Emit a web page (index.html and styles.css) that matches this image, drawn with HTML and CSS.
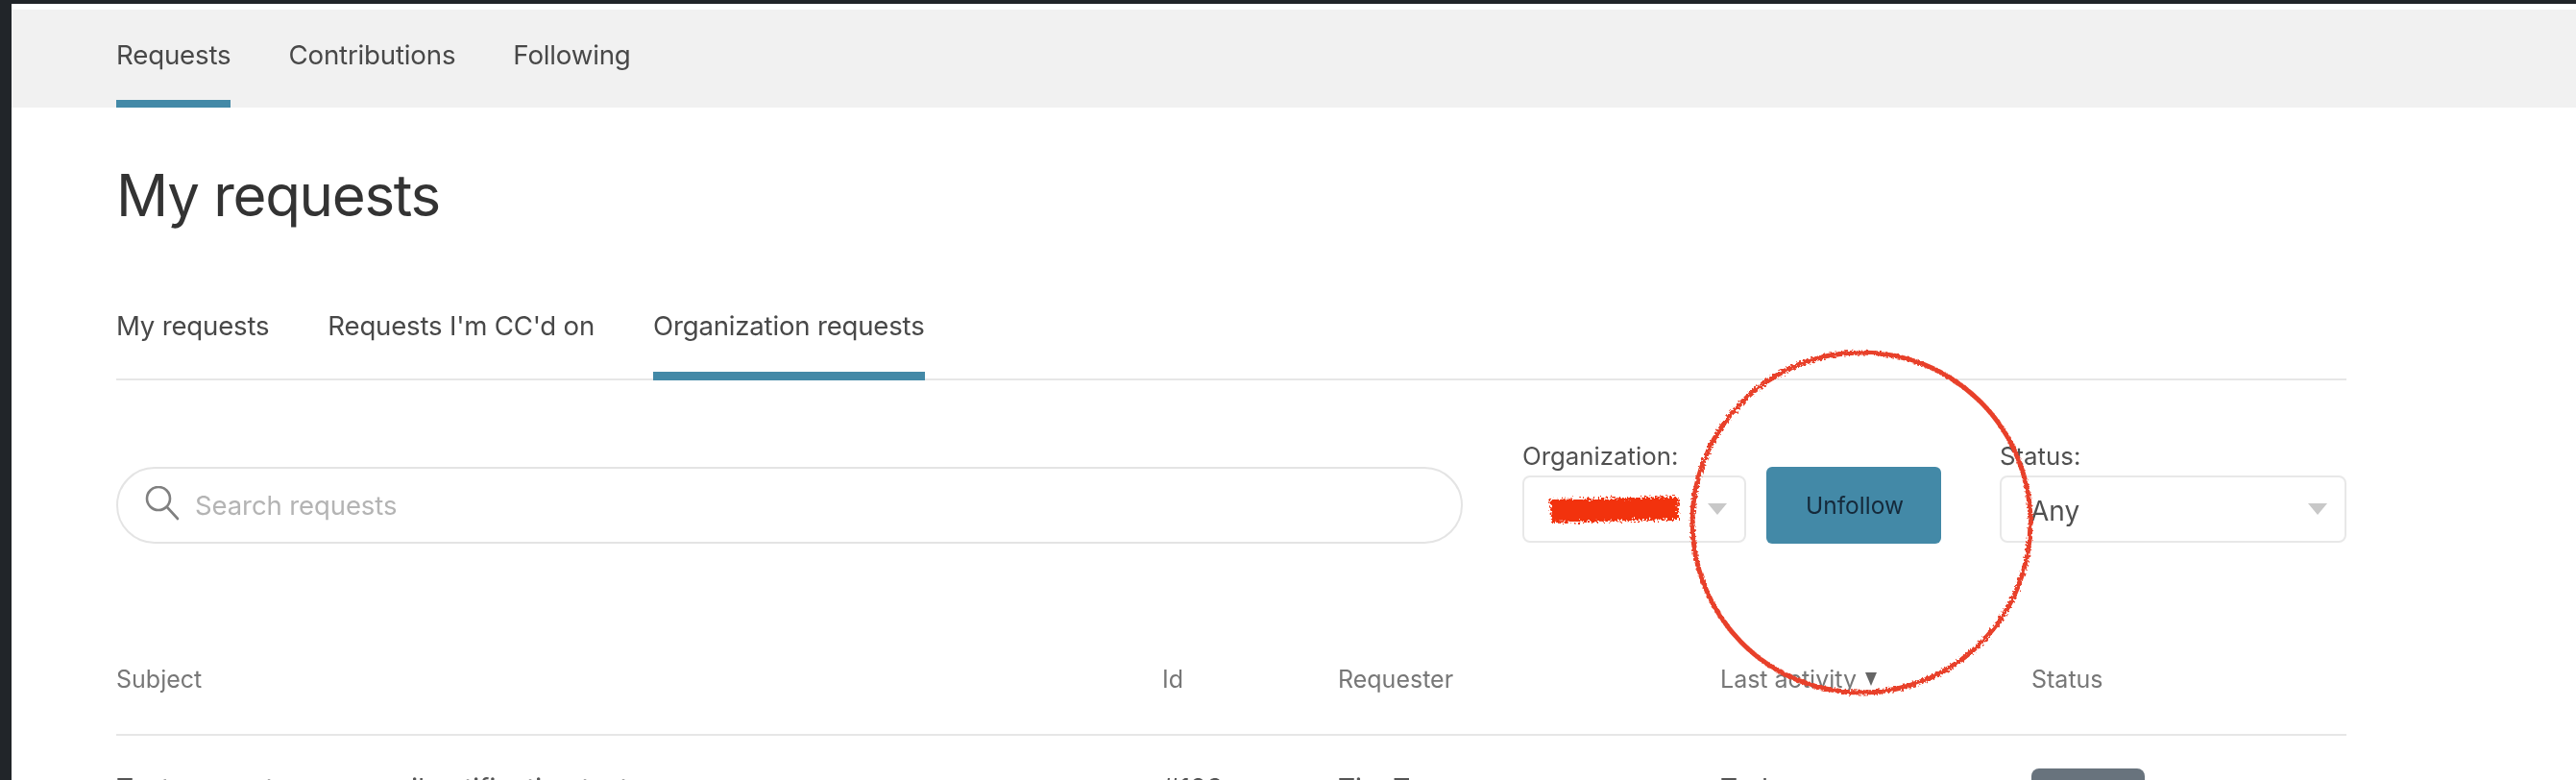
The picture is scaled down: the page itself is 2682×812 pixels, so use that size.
FILE: index.html
```html
<!DOCTYPE html>
<html lang="en">
<head>
<meta charset="utf-8">
<title>My requests</title>
<link rel="stylesheet" href="styles.css">
</head>
<body>
<div class="sheet">
  <nav class="topnav">
    <a class="topnav-item is-active">Requests</a>
    <a class="topnav-item">Contributions</a>
    <a class="topnav-item">Following</a>
  </nav>
  <main class="content">
    <h1 class="title">My requests</h1>
    <nav class="subnav">
      <a class="subnav-item">My requests</a>
      <a class="subnav-item">Requests I'm CC'd on</a>
      <a class="subnav-item is-active">Organization requests</a>
    </nav>
    <div class="filters">
      <div class="search">
        <svg class="search-icon" viewBox="0 0 36 36" fill="none" stroke="#808080" stroke-width="2.6" stroke-linecap="round"><circle cx="14" cy="13" r="12"/><path d="M23 22l11 12"/></svg>
        <span class="placeholder">Search requests</span>
      </div>
      <div class="field field-org">
        <label class="field-label">Organization:</label>
        <div class="select">
          <svg class="scribble" viewBox="0 0 146 38" aria-hidden="true"><path d="M6 8L140 5L139 29L7 32Z" fill="#f23010" filter="url(#rough-blob)"/></svg>
          <span class="caret"></span>
        </div>
      </div>
      <button class="btn">Unfollow</button>
      <div class="field field-status">
        <label class="field-label">Status:</label>
        <div class="select"><span class="select-value">Any</span><span class="caret"></span></div>
      </div>
    </div>
    <div class="row row-head">
      <span class="col col-subject">Subject</span>
      <span class="col col-id">Id</span>
      <span class="col col-req">Requester</span>
      <span class="col col-act">Last activity <i class="sort"></i></span>
      <span class="col col-status">Status</span>
    </div>
    <div class="row row-body">
      <span class="col col-subject">Test request as an email notification test</span>
      <span class="col col-id">#123</span>
      <span class="col col-req">Tim T</span>
      <span class="col col-act">Today</span>
      <span class="col col-status"><span class="badge"></span></span>
    </div>
  </main>
  <svg class="annotation" viewBox="0 0 380 380" fill="none">
    <defs>
      <filter id="rough" x="-5%" y="-5%" width="110%" height="110%">
        <feTurbulence type="fractalNoise" baseFrequency="0.4" numOctaves="2" seed="3"/>
        <feDisplacementMap in="SourceGraphic" scale="5"/>
      </filter>
      <filter id="rough-blob" x="-10%" y="-30%" width="120%" height="160%">
        <feTurbulence type="fractalNoise" baseFrequency="0.45" numOctaves="2" seed="8"/>
        <feDisplacementMap in="SourceGraphic" scale="11"/>
      </filter>
    </defs>
    <ellipse cx="190" cy="190" rx="176" ry="177" stroke="#e8412a" stroke-width="5" filter="url(#rough)"/>
  </svg>
</div>
</body>
</html>
```
FILE: styles.css
```css
* { box-sizing: border-box; }
html, body { margin: 0; height: 100%; }
body {
  background: #212529;
  overflow: hidden;
  font-family: Inter, "Liberation Sans", sans-serif;
  color: #555;
  padding: 4px 0 0 12px;
}
.sheet {
  position: relative;
  height: 808px;
  background: #fff;
  padding-top: 6px;
  overflow: hidden;
}
.topnav {
  display: flex;
  gap: 60px;
  height: 102px;
  padding-left: 109px;
  background: #f1f1f1;
}
.topnav-item {
  height: 102px;
  padding-top: 29px;
  font-size: 27.7px;
  line-height: 36px;
  letter-spacing: -0.2px;
  color: #484848;
  filter: blur(0.5px);
}
.topnav-item.is-active { border-bottom: 8px solid #4389a7; }
.content { padding: 0 0 0 109px; width: 2431px; filter: blur(0.5px); }
.title {
  margin: 55px 0 0;
  font-size: 60px;
  line-height: 72px;
  font-weight: 400;
  letter-spacing: -1.3px;
  color: #333;
}
.subnav {
  display: flex;
  gap: 61px;
  margin-top: 67px;
  height: 90px;
  border-bottom: 2px solid #e6e6e6;
}
.subnav-item {
  height: 90px;
  padding-top: 15px;
  font-size: 27.6px;
  line-height: 36px;
  letter-spacing: -0.2px;
  color: #484848;
}
.subnav-item.is-active { border-bottom: 9px solid #4389a7; }
.filters {
  display: flex;
  align-items: flex-end;
  margin-top: 90px;
  height: 80px;
}
.search {
  display: flex;
  align-items: center;
  width: 1402px;
  height: 80px;
  padding-left: 28px;
  border: 2px solid #e4e4e4;
  border-radius: 40px;
}
.search-icon { width: 36px; height: 36px; margin: -5px 16px 0 0; flex: none; }
.placeholder { font-size: 27.5px; line-height: 36px; letter-spacing: -0.1px; color: #b4b4b4; }
.field { display: flex; flex-direction: column; margin-bottom: 1px; }
.field-org { width: 233px; margin-left: 62px; }
.field-status { width: 361px; margin-left: 61px; }
.field-label {
  font-size: 25.8px;
  line-height: 30px;
  margin-bottom: 5px;
  color: #505050;
  white-space: nowrap;
}
.select {
  display: flex;
  align-items: center;
  justify-content: space-between;
  height: 70px;
  padding: 0 18px 0 30px;
  border: 2px solid #e8e8e8;
  border-radius: 8px;
}
.select-value { font-size: 28px; line-height: 36px; color: #505050; margin-top: 3px; }
.scribble {
  flex: none;
  width: 146px;
  height: 38px;
  margin: 2px 0 0 -9px;
}
.caret {
  flex: none;
  width: 0;
  height: 0;
  border-left: 10px solid transparent;
  border-right: 10px solid transparent;
  border-top: 12px solid #c8c8c8;
}
.btn {
  width: 182px;
  height: 80px;
  margin-left: 21px;
  padding: 0 0 0 2px;
  border: 0;
  border-radius: 6px;
  background: #4389a7;
  color: #15293a;
  font: 400 24.5px/30px Inter, "Liberation Sans", sans-serif;
}
.row { display: flex; }
.col { display: block; flex: none; white-space: nowrap; }
.col-subject { width: 1089px; }
.col-id { width: 183px; }
.col-req { width: 398px; }
.col-act { width: 324px; }
.col-status { width: 119px; }
.row-head {
  margin-top: 125px;
  height: 75px;
  border-bottom: 2px solid #e6e6e6;
  font-size: 25px;
  line-height: 32px;
  color: #777;
}
.sort {
  display: inline-block;
  margin-left: 2px;
  vertical-align: 2px;
  border-left: 6px solid transparent;
  border-right: 6px solid transparent;
  border-top: 14px solid #666;
}
.row-body {
  padding-top: 39px;
  font-size: 28px;
  line-height: 32px;
  color: #555;
}
.badge {
  display: block;
  width: 118px;
  height: 50px;
  margin-top: -5px;
  background: #68737d;
  border-radius: 8px;
}
.annotation {
  position: absolute;
  left: 1736px;
  top: 350px;
  width: 380px;
  height: 380px;
}
```
